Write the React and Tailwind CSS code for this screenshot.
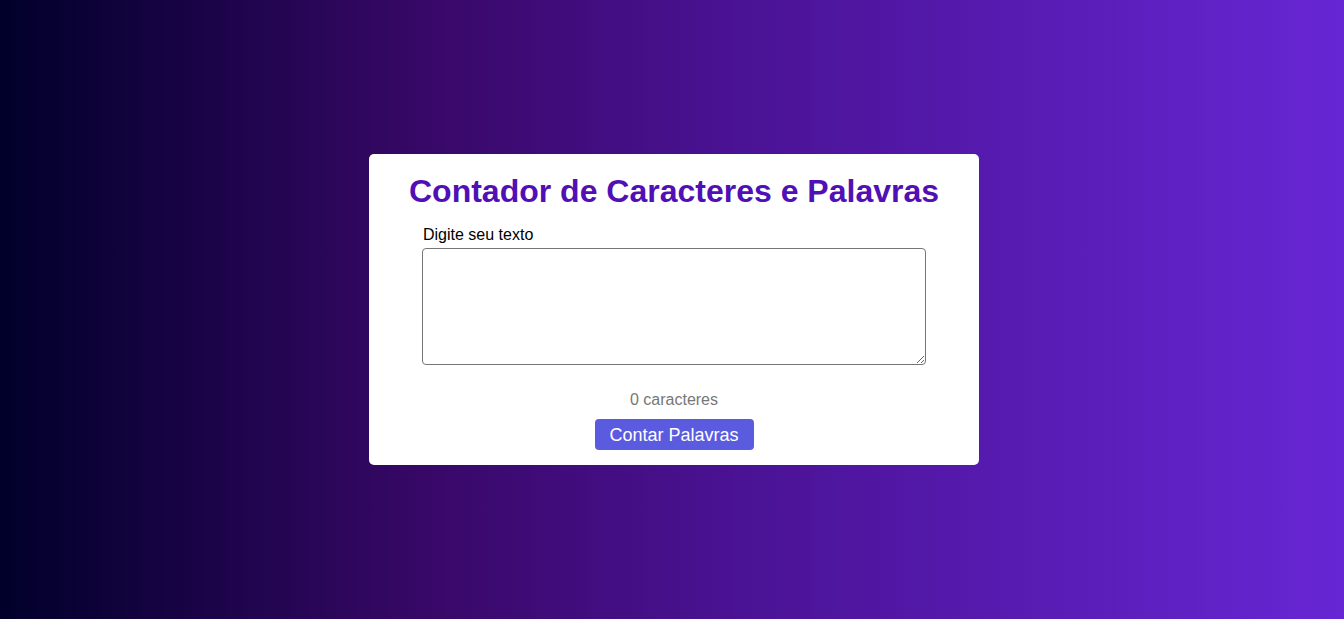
import React, { useState } from 'react';

const App = () => {
    const [text, setText] = useState('');

    return (
        <div className="min-h-screen w-full flex items-center justify-center pl-[4px] bg-[linear-gradient(to_right,#00002a,#380868_32%,#4a1294_55%,#6726d4)] font-['Liberation_Sans',Arial,sans-serif]">
            <div className="w-[610px] bg-white rounded-[5px] flex flex-col items-center pt-[17px] pb-[15px]">
                <h1 className="text-[32px] leading-[40px] font-bold text-[#5010b6]">
                    Contador de Caracteres e Palavras
                </h1>
                <div className="w-[504px] flex flex-col mt-[15px]">
                    <label className="text-[16px] leading-[18px] text-black pl-[1px]">Digite seu texto</label>
                    <textarea
                        className="mt-[4px] h-[117px] w-full border border-[#767676] rounded-[4px] p-2"
                        value={text}
                        onChange={(e) => setText(e.target.value)}
                    />
                </div>
                <p className="mt-[26px] text-[16px] leading-[18px] text-[#777777]">{text.length} caracteres</p>
                <button className="mt-[10px] w-[159px] h-[31px] bg-[#5b5be0] text-white text-[18px] leading-none rounded-[4px]">
                    Contar Palavras
                </button>
            </div>
        </div>
    );
};

export default App;
